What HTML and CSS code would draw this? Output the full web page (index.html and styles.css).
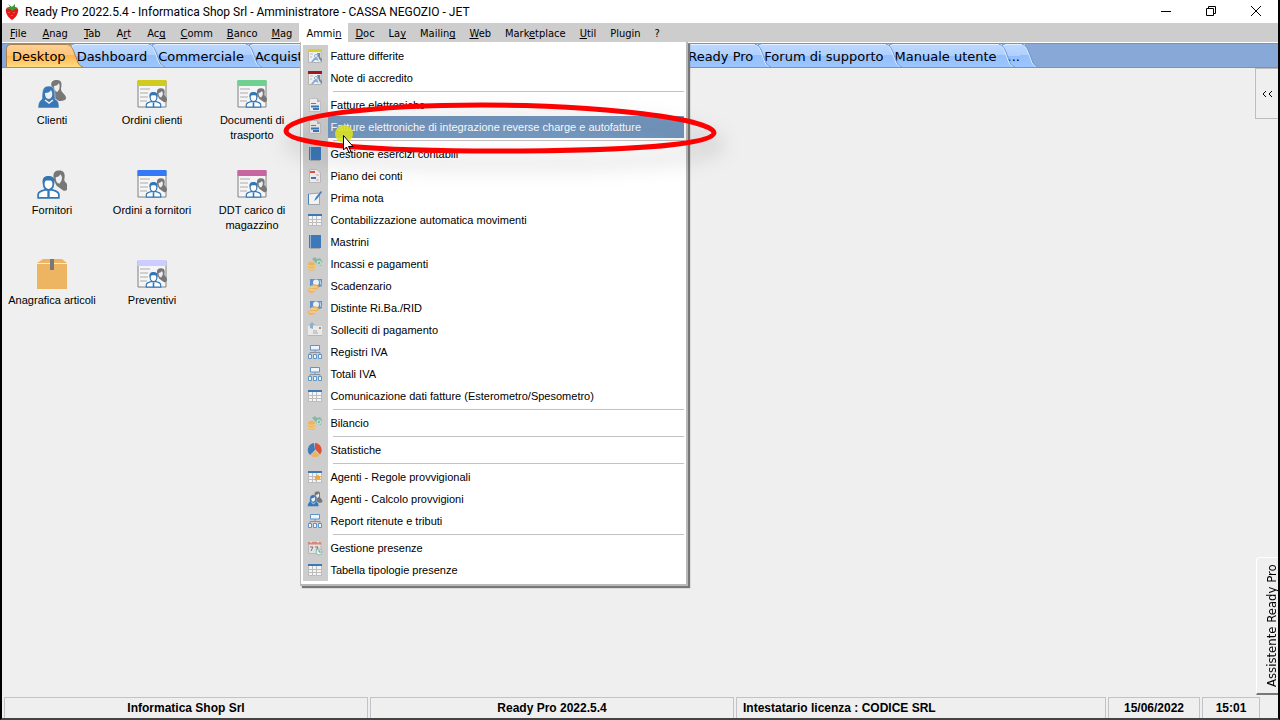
FILE: index.html
```html
<!DOCTYPE html>
<html lang="it">
<head>
  <meta charset="UTF-8">
  <meta name="viewport" content="width=device-width, initial-scale=1.0">
  <title>Ready Pro 2022.5.4</title>
  <link rel="stylesheet" href="styles.css">
</head>
<body>
  <!-- Icon sprite -->
  <svg class="sprite" aria-hidden="true">
    <defs>
      <linearGradient id="tabBlue" x1="0" y1="0" x2="0" y2="1">
        <stop offset="0" stop-color="#bcd8ff"/>
        <stop offset="0.5" stop-color="#afd0ff"/>
        <stop offset="0.5" stop-color="#94bffb"/>
        <stop offset="1" stop-color="#9cc6ff"/>
      </linearGradient>
      <linearGradient id="tabOrange" x1="0" y1="0" x2="0" y2="1">
        <stop offset="0" stop-color="#ffd096"/>
        <stop offset="0.5" stop-color="#ffc377"/>
        <stop offset="0.5" stop-color="#ffb44e"/>
        <stop offset="1" stop-color="#ffdc82"/>
      </linearGradient>
    </defs>
    <symbol id="slope" viewBox="0 0 18 23">
      <path d="M0 0C4 0 6 3 8 8L11 16C12 20 14 22 17 23H0Z" fill="url(#tabBlue)"/>
      <path d="M0 .5C4 .5 6 3 8 8L11 16C12 20 14 22 17 23" fill="none" stroke="#e4f0ff"/>
      <path d="M2 .5C5 .5 7 3 9 8L12 16C13 20 15 22 18 23" fill="none" stroke="#6f9ad2"/>
    </symbol>
    <symbol id="slope-on" viewBox="0 0 18 23">
      <path d="M0 0C4 0 6 3 8 8L11 16C12 20 14 22 17 23H0Z" fill="url(#tabOrange)"/>
      <path d="M0 .5C4 .5 6 3 8 8L11 16C12 20 14 22 17 23" fill="none" stroke="#a8814f"/>
    </symbol>

    <symbol id="person" viewBox="0 0 20 20">
      <path d="M1 19V16C1 14 3 13 7 12L13 12C17 13 19 14 19 16V19Z" fill="#fff" stroke="#3376b5" stroke-width="1.500"/>
      <path d="M9 13H11L11 19H9Z" fill="#3376b5"/>
      <ellipse cx="10" cy="7" rx="4.200" ry="5" fill="#fff" stroke="#3376b5" stroke-width="1.500"/>
      <path d="M5 7C4 1 7 0 10 0S16 1 15 7C14 4 13 4 10 4S6 4 5 7Z" fill="#3376b5"/>
    </symbol>
    <symbol id="woman" viewBox="0 0 20 22">
      <path d="M5 10C4 3 5 0 11 0S17 5 16 10C17 13 20 14 20 17C20 20 18 22 15 21L8 16Z" fill="#777"/>
      <path d="M7 7C9 7 11 6 12 4C14 6 14 8 13 11L11 14C8 13 7 11 7 7Z" fill="#eee"/>
    </symbol>
    <symbol id="clients" viewBox="0 0 30 30">
      <path d="M15 10C13 3 15 1 20 1S25 5 24 10C24 14 29 15 29 19C29 21 27 22 22 22L15 18Z" fill="#777"/>
      <path d="M17 7C19 7 21 6 22 4C23 7 23 11 20 13C18 12 17 10 17 7Z" fill="#efefef"/>
      <path d="M5 20C5 11 6 7 12 7S18 13 18 20C22 22 22 25 22 29H1C1 25 2 22 5 20Z" fill="#3878b7" stroke="#efefef" stroke-width=".5"/>
      <path d="M8 14C11 14 13 13 14 11C16 14 16 19 12 20C9 20 8 17 8 14Z" fill="#efefef"/>
      <path d="M8 21L12 24L16 21" fill="none" stroke="#efefef" stroke-width="1.500"/>
    </symbol>
    <symbol id="suppliers" viewBox="0 0 30 30">
      <use href="#woman" x="12" y="1" width="19" height="22"/>
      <use href="#person" x="0" y="7" width="23" height="23"/>
    </symbol>
    <symbol id="order" viewBox="0 0 30 30">
      <path d="M1 2H29V28H1Z" fill="#f5f5f5" stroke="#808080"/>
      <path d="M3 10H13M3 14H11M3 18H11M3 22H10" stroke="#c4c4c4" stroke-width="1.500"/>
      <path d="M.5 1H29.500V7H.5Z" fill="currentColor"/>
      <use href="#woman" x="17" y="8" width="13" height="17"/>
      <use href="#person" x="8" y="13" width="17" height="16"/>
    </symbol>
    <symbol id="box" viewBox="0 0 30 30">
      <path d="M6 0H25L30 4H0ZM0 5H30V30H0Z" fill="#edb562"/>
      <path d="M13 0H17V11H13Z" fill="#787878"/>
    </symbol>

    <symbol id="invoice" viewBox="0 0 16 16">
      <path d="M1.500 2H14V14.500H1.500Z" fill="#f0f0f0" stroke="#b4b4b4"/>
      <path d="M1 1H15V4H1Z" fill="currentColor"/>
      <path d="M3 6H6M3 9H5" stroke="#bbb"/>
      <path d="M4 14L7 10L10 9L12 14L10 12L8 12L6 14Z" fill="#84addb"/>
      <circle cx="9" cy="8" r="1.500" fill="#fff" stroke="#84addb"/>
      <path d="M10 5H13V9L15 11V14L12 11Z" fill="#7c8997"/>
    </symbol>
    <symbol id="sheet" viewBox="0 0 16 16">
      <path d="M2.500 1.500H10L13.500 5V14.500H2.500Z" fill="#ececec" stroke="#c0c0c0"/>
      <path d="M10 1L14 5H10Z" fill="#b5b5b5"/>
      <path d="M4 6.500H9" stroke="#4c82c4"/>
      <path d="M4 9.500H8M7 9.500H12M6 12H12" stroke="#3f78b5" stroke-width="2"/>
    </symbol>
    <symbol id="book" viewBox="0 0 16 16">
      <path d="M2 1H14V14H2Z" fill="#3d78b9"/>
      <path d="M3.500 1V14" stroke="#8fb3d8"/>
      <path d="M3 14.500H13" stroke="#a8a8a8"/>
    </symbol>
    <symbol id="chart" viewBox="0 0 16 16">
      <path d="M2.500 1.500H10L13.500 5V14.500H2.500Z" fill="#ececec" stroke="#b8b8b8"/>
      <path d="M3 4H8" stroke="#d8573d" stroke-width="2"/>
      <path d="M4 10H9" stroke="#3f78b5" stroke-width="2"/>
      <path d="M9 7H12M9 12H12" stroke="#d8a0a0"/>
    </symbol>
    <symbol id="note" viewBox="0 0 16 16">
      <path d="M1.500 4L12.500 3V14.500H1.500Z" fill="#f2f2f2" stroke="#9aa7b3"/>
      <path d="M1.500 4V14.500" stroke="#4a80ba"/>
      <path d="M7 11L9 7L14 1L15 2L10 9Z" fill="#447cb8"/>
    </symbol>
    <symbol id="grid" viewBox="0 0 16 16">
      <path d="M1 2H15V14H1Z" fill="#f4f4f4"/>
      <path d="M1 7.500H15M1 10.500H15M1 13.500H15M1.500 4V14M5.500 4V14M9.500 4V14M14.500 4V14" stroke="#bdbdbd"/>
      <path d="M1 2H15V4H1Z" fill="#3d78b9"/>
    </symbol>
    <symbol id="coins" viewBox="0 0 16 16">
      <path d="M5 3L8 1L10 3L13 2L15 5L14 10L10 9L8 6Z" fill="#86b9a3"/>
      <circle cx="12" cy="7" r="2" fill="none" stroke="#d6e8df"/>
      <path d="M1 8C1 5 8 5 8 8V13C8 15 1 15 1 13Z" fill="#ecb45c"/>
      <path d="M1 9C3 11 6 11 8 9M1 12C3 13.500 6 13.500 8 12" fill="none" stroke="#f5d9a8"/>
    </symbol>
    <symbol id="cash" viewBox="0 0 16 16">
      <path d="M3 1H15V8L10 10L3 8Z" fill="#5d91c9"/>
      <circle cx="9" cy="4.500" r="3" fill="#e8f0f8"/>
      <path d="M13 2L14 7" stroke="#c5d9ec"/>
      <path d="M4 7.500C7 5.500 10 6 10 7.500L12 8V10L8 12V14L3 15L1 13V11L4 10Z" fill="#ecb45c"/>
      <path d="M4 9H10M2 12H8" stroke="#f7ddb0"/>
    </symbol>
    <symbol id="mail" viewBox="0 0 16 16">
      <path d="M1 4H15V14H1Z" fill="#eaeaea"/>
      <path d="M1 13.500H15" stroke="#b7b7b7"/>
      <path d="M6 9H10M6 11H11" stroke="#aaa"/>
      <path d="M12 5H14V7H12Z" fill="#999"/>
      <path d="M3 6V3H2L5 0L8 3H6V7Z" fill="#8fb0cd"/>
    </symbol>
    <symbol id="tree" viewBox="0 0 16 16">
      <path d="M8 6V9M3 11V8.500H13V11" fill="none" stroke="#8a939c"/>
      <path d="M3.500 1.500H12.500V6H3.500Z" fill="#edf4fb" stroke="#5f94c9"/>
      <path d="M1.500 10.500H4.500V14.500H1.500ZM6.500 10.500H9.500V14.500H6.500ZM11.500 10.500H14.500V14.500H11.500Z" fill="#edf4fb" stroke="#5f94c9"/>
    </symbol>
    <symbol id="pie" viewBox="0 0 16 16">
      <path d="M8 8L3 13A7 7 0 0 1 7 1Z" fill="#4279b8"/>
      <path d="M8 7L8 1A7 7 0 0 1 13 12.500Z" fill="#dc5238"/>
      <path d="M8 9L12.500 13.500A7 7 0 0 1 3.500 13.500Z" fill="#ecb45c"/>
    </symbol>
    <symbol id="rules" viewBox="0 0 16 16">
      <use href="#grid" width="16" height="16"/>
      <path d="M11 5L12 7L14 7L13 9L14 11L11 10L8 12L8 9L7 8L10 7Z" fill="#f0a63a"/>
    </symbol>
    <symbol id="calendar" viewBox="0 0 16 16">
      <path d="M1.500 2.500H14V13.500H1.500Z" fill="#e2e2e2" stroke="#b8b8b8"/>
      <path d="M1 2H14V4.500H1Z" fill="#d98878"/>
      <path d="M4 1V3M11 1V3" stroke="#eee"/>
      <path d="M3 7H6L4 11M8 7H11L9 11" fill="none" stroke="#777"/>
      <circle cx="12" cy="12" r="3" fill="#e6f2ee" stroke="#91bcb0"/>
      <path d="M12 10V12H14" fill="none" stroke="#669a8b"/>
    </symbol>
  </svg>

  <div class="window">
    <header class="titlebar">
      <svg class="logo" viewBox="0 0 14 18">
        <path d="M1 6C3 3 11 3 13 6C14 9 11 15 7 17C3 15 0 9 1 6Z" fill="#e61919"/>
        <path d="M1 5L5 4L3 1L7 4L10 1L10 4L13 5L10 6L7 8L5 6Z" fill="#3a9a35"/>
        <path d="M4 9V10M9 9V10M7 12V13" stroke="#ff8b7a"/>
      </svg>
      <h1>Ready Pro 2022.5.4 - Informatica Shop Srl - Amministratore - CASSA NEGOZIO - JET</h1>
      <div class="window-buttons">
        <button type="button" aria-label="Riduci a icona"><svg viewBox="0 0 12 12"><path d="M1 6.500H11" /></svg></button>
        <button type="button" aria-label="Ripristina"><svg viewBox="0 0 12 12"><path d="M1.500 3.500H8.500V10.500H1.500ZM3.500 3.500V1.500H10.500V8.500H8.500"/></svg></button>
        <button type="button" aria-label="Chiudi"><svg viewBox="0 0 12 12"><path d="M1 1L11 11M11 1L1 11"/></svg></button>
      </div>
    </header>

    <nav class="menubar">
      <div class="menu"><button type="button"><u>F</u>ile</button></div>
      <div class="menu"><button type="button"><u>A</u>nag</button></div>
      <div class="menu"><button type="button"><u>T</u>ab</button></div>
      <div class="menu"><button type="button">A<u>r</u>t</button></div>
      <div class="menu"><button type="button">Ac<u>q</u></button></div>
      <div class="menu"><button type="button"><u>C</u>omm</button></div>
      <div class="menu"><button type="button"><u>B</u>anco</button></div>
      <div class="menu"><button type="button"><u>M</u>ag</button></div>
      <div class="menu open">
        <button type="button">Ammi<u>n</u></button>
        <div class="dropdown">
          <ul>
            <li><button type="button"><svg style="color: #d8cf2c"><use href="#invoice"/></svg>Fatture differite</button></li>
            <li><button type="button"><svg style="color: #a3161c"><use href="#invoice"/></svg>Note di accredito</button></li>
            <li class="separator"></li>
            <li><button type="button"><svg><use href="#sheet"/></svg>Fatture elettroniche</button></li>
            <li><button type="button" class="selected"><svg><use href="#sheet"/></svg>Fatture elettroniche di integrazione reverse charge e autofatture</button></li>
            <li class="separator"></li>
            <li><button type="button"><svg><use href="#book"/></svg>Gestione esercizi contabili</button></li>
            <li><button type="button"><svg><use href="#chart"/></svg>Piano dei conti</button></li>
            <li><button type="button"><svg><use href="#note"/></svg>Prima nota</button></li>
            <li><button type="button"><svg><use href="#grid"/></svg>Contabilizzazione automatica movimenti</button></li>
            <li><button type="button"><svg><use href="#book"/></svg>Mastrini</button></li>
            <li><button type="button"><svg><use href="#coins"/></svg>Incassi e pagamenti</button></li>
            <li><button type="button"><svg><use href="#cash"/></svg>Scadenzario</button></li>
            <li><button type="button"><svg><use href="#cash"/></svg>Distinte Ri.Ba./RID</button></li>
            <li><button type="button"><svg><use href="#mail"/></svg>Solleciti di pagamento</button></li>
            <li><button type="button"><svg><use href="#tree"/></svg>Registri IVA</button></li>
            <li><button type="button"><svg><use href="#tree"/></svg>Totali IVA</button></li>
            <li><button type="button"><svg><use href="#grid"/></svg>Comunicazione dati fatture (Esterometro/Spesometro)</button></li>
            <li class="separator"></li>
            <li><button type="button"><svg><use href="#coins"/></svg>Bilancio</button></li>
            <li class="separator"></li>
            <li><button type="button"><svg><use href="#pie"/></svg>Statistiche</button></li>
            <li class="separator"></li>
            <li><button type="button"><svg><use href="#rules"/></svg>Agenti - Regole provvigionali</button></li>
            <li><button type="button"><svg><use href="#clients"/></svg>Agenti - Calcolo provvigioni</button></li>
            <li><button type="button"><svg><use href="#tree"/></svg>Report ritenute e tributi</button></li>
            <li class="separator"></li>
            <li><button type="button"><svg><use href="#calendar"/></svg>Gestione presenze</button></li>
            <li><button type="button"><svg><use href="#grid"/></svg>Tabella tipologie presenze</button></li>
          </ul>
          <svg class="highlight" viewBox="0 0 450 80" aria-hidden="true">
            <path d="M10 39C10 24 96 13 206 13C326 13 438 27 438 41C438 53 346 59 222 59C102 59 10 53 10 39Z"/>
          </svg>
          <svg class="pointer" viewBox="0 0 24 32" aria-hidden="true">
            <circle cx="11" cy="10" r="9" fill="#d9e021" opacity=".9"/>
            <path d="M10.500 11.500V26L13.500 23L16 28.500L18 27.500L15.500 22.500H20Z" fill="#fff" stroke="#000"/>
          </svg>
        </div>
      </div>
      <div class="menu"><button type="button"><u>D</u>oc</button></div>
      <div class="menu"><button type="button">La<u>y</u></button></div>
      <div class="menu"><button type="button">Mailin<u>g</u></button></div>
      <div class="menu"><button type="button"><u>W</u>eb</button></div>
      <div class="menu"><button type="button">Mark<u>e</u>tplace</button></div>
      <div class="menu"><button type="button"><u>U</u>til</button></div>
      <div class="menu"><button type="button">Plugin</button></div>
      <div class="menu"><button type="button">?</button></div>
    </nav>

    <div class="tabs">
      <button type="button" class="tab active">Desktop<svg><use href="#slope-on"/></svg></button>
      <button type="button" class="tab">Dashboard<svg><use href="#slope"/></svg></button>
      <button type="button" class="tab">Commerciale<svg><use href="#slope"/></svg></button>
      <button type="button" class="tab">Acquisti<svg><use href="#slope"/></svg></button>
      <button type="button" class="tab wide">Ready Pro<svg><use href="#slope"/></svg></button>
      <button type="button" class="tab">Forum di supporto<svg><use href="#slope"/></svg></button>
      <button type="button" class="tab">Manuale utente<svg><use href="#slope"/></svg></button>
      <button type="button" class="tab">...<svg><use href="#slope"/></svg></button>
    </div>

    <main class="workspace">
      <div class="shortcuts">
        <a href="#"><svg><use href="#clients"/></svg>Clienti</a>
        <a href="#"><svg style="color: #cfcb20"><use href="#order"/></svg>Ordini clienti</a>
        <a href="#"><svg style="color: #6fd190"><use href="#order"/></svg>Documenti di trasporto</a>
        <a href="#"><svg><use href="#suppliers"/></svg>Fornitori</a>
        <a href="#"><svg style="color: #3579f6"><use href="#order"/></svg>Ordini a fornitori</a>
        <a href="#"><svg style="color: #c8669f"><use href="#order"/></svg>DDT carico di magazzino</a>
        <a href="#"><svg><use href="#box"/></svg>Anagrafica articoli</a>
        <a href="#"><svg style="color: #ccccff"><use href="#order"/></svg>Preventivi</a>
      </div>
      <aside class="side">
        <button type="button" class="expand" aria-label="Espandi"><svg viewBox="0 0 12 8"><path d="M5 1L2 4L5 7M11 1L8 4L11 7"/></svg></button>
        <button type="button" class="assistant">Assistente Ready Pro</button>
      </aside>
    </main>

    <footer class="statusbar">
      <div class="cell">Informatica Shop Srl</div>
      <div class="cell">Ready Pro 2022.5.4</div>
      <div class="cell left">Intestatario licenza : CODICE SRL</div>
      <div class="cell date">15/06/2022</div>
      <div class="cell time">15:01</div>
    </footer>
  </div>
</body>
</html>
```
FILE: styles.css
```css
* {
  margin: 0;
  padding: 0;
  box-sizing: border-box;
}

body {
  font-family: "Liberation Sans", Tahoma, sans-serif;
  font-size: 11px;
  color: #000;
  background: #efefef;
}

button {
  font: inherit;
  color: inherit;
  border: none;
  background: none;
  white-space: nowrap;
}

.sprite {
  position: absolute;
  width: 0;
  height: 0;
}

.window {
  display: flex;
  flex-direction: column;
  min-height: 100vh;
  border: 2px solid #000;
  border-top: none;
  border-bottom-color: #444;
}

/* Title bar */
.titlebar {
  display: flex;
  align-items: center;
  height: 23px;
  padding-left: 3px;
  background: #fff;
}

.logo {
  width: 14px;
  height: 18px;
  margin-right: 6px;
}

.titlebar h1 {
  flex: 1;
  font-family: Roboto, "Segoe UI", sans-serif;
  font-size: 12px;
  font-weight: 400;
}

.window-buttons {
  display: flex;
}

.window-buttons button {
  width: 45px;
  height: 20px;
}

.window-buttons svg {
  width: 12px;
  height: 12px;
  fill: none;
  stroke: #000;
}

/* Menu bar */
.menubar {
  display: flex;
  height: 20px;
  background: #cdcdcd;
  border-bottom: 1px solid #fff;
}

.menu {
  position: relative;
}

.menu > button {
  height: 19px;
  padding: 1px 8px 0;
  font-family: "DejaVu Sans Condensed", "DejaVu Sans", Tahoma, sans-serif;
}

.menu:nth-child(n + 6) > button {
  padding: 1px 7px 0;
}

.menu u {
  text-decoration-skip-ink: none;
}

.menu.open > button {
  background: #fff;
}

.dropdown {
  position: absolute;
  z-index: 10;
  top: 100%;
  left: 1px;
  width: 388px;
  padding: 3px 2px;
  background: #fff;
  border: solid #b9b9b9;
  border-width: 0 2px 2px 1px;
  box-shadow: 2px 2px 1px #777;
}

.dropdown ul {
  list-style: none;
  background: linear-gradient(90deg, #cdcdcd 25px, #fff 25px);
}

.dropdown ul button {
  display: flex;
  align-items: center;
  width: 100%;
  height: 22px;
  padding-left: 4px;
  text-align: left;
}

.dropdown ul svg {
  width: 16px;
  height: 16px;
  margin-right: 7px;
}

.dropdown .selected {
  color: #fff;
  background: linear-gradient(90deg, #cdcdcd 25px, #7498c0 25px);
}

.separator {
  height: 5px;
  padding: 2px 0 0 30px;
}

.separator::before {
  content: "";
  display: block;
  height: 1px;
  background: #c2c2c2;
}

.highlight {
  position: absolute;
  top: 50px;
  left: -25px;
  width: 450px;
  height: 80px;
  overflow: visible;
  fill: none;
  stroke: #f00;
  stroke-width: 5px;
  filter: drop-shadow(4px 12px 10px rgba(0, 0, 0, 0.25));
  pointer-events: none;
}

.pointer {
  position: absolute;
  top: 82px;
  left: 32px;
  width: 24px;
  height: 32px;
  pointer-events: none;
}

/* Tabs */
.tabs {
  display: flex;
  align-items: flex-end;
  height: 25px;
  padding-left: 4px;
  background: #88a9d8;
  border-top: 1px solid #6b95cc;
  border-bottom: 1px solid #6b95cc;
}

.tab {
  position: relative;
  height: 23px;
  padding: 0 5px;
  border: 1px solid #e4f0ff;
  border-width: 1px 0 0 1px;
  border-radius: 5px 0 0 0;
  background: linear-gradient(#bcd8ff, #afd0ff 50%, #94bffb 50%, #9cc6ff);
  font-family: "DejaVu Sans", Verdana, sans-serif;
  font-size: 13px;
}

.tab.active {
  border-color: #a8814f;
  background: linear-gradient(#ffd096, #ffc377 50%, #ffb44e 50%, #ffdc82);
}

.tab.wide {
  width: 447px;
  text-align: right;
}

.tab svg {
  position: absolute;
  z-index: 1;
  top: -1px;
  left: calc(100% - 5px);
  width: 18px;
  height: 23px;
}

/* Desktop area */
.workspace {
  display: flex;
  flex: 1;
  justify-content: space-between;
}

.shortcuts {
  display: grid;
  grid-template-columns: repeat(3, 100px);
  grid-auto-rows: 90px;
  padding-top: 11px;
}

.shortcuts a {
  display: flex;
  flex-direction: column;
  align-items: center;
  padding: 0 12px;
  color: inherit;
  line-height: 15px;
  text-align: center;
  text-decoration: none;
}

.shortcuts a:nth-child(3n + 1),
.shortcuts a:nth-child(3n + 2) {
  padding: 0;
}

.shortcuts svg {
  flex: none;
  width: 30px;
  height: 30px;
  margin-bottom: 4px;
}

.side {
  display: flex;
  flex-direction: column;
  justify-content: space-between;
  align-items: flex-end;
  padding-bottom: 2px;
}

.expand {
  width: 23px;
  height: 51px;
  border: 1px solid #bdbdbd;
  border-right: none;
}

.expand svg {
  width: 12px;
  height: 8px;
  fill: none;
  stroke: #000;
}

/* rotated half a turn, so its borders are mirrored */
.assistant {
  width: 22px;
  height: 138px;
  padding-right: 8px;
  border: 1px solid #fff;
  border-left: none;
  border-top: 2px solid #777;
  border-radius: 0 0 4px 0;
  font-family: "DejaVu Sans Condensed", "DejaVu Sans", Tahoma, sans-serif;
  font-size: 13px;
  line-height: 13px;
  writing-mode: vertical-rl;
  transform: rotate(180deg);
}

/* Status bar */
.statusbar {
  display: flex;
  gap: 2px;
  height: 21px;
  padding: 0 18px 0 2px;
  font-family: "Liberation Sans", Arial, sans-serif;
  font-size: 12px;
  font-weight: 700;
}

.cell {
  display: flex;
  flex: 1;
  align-items: center;
  justify-content: center;
  border: 1px solid #c2c2c8;
  border-bottom: none;
}

.cell.left {
  justify-content: flex-start;
  padding-left: 6px;
}

.cell.date {
  flex: 0 0 92px;
}

.cell.time {
  flex: 0 0 58px;
}
```
